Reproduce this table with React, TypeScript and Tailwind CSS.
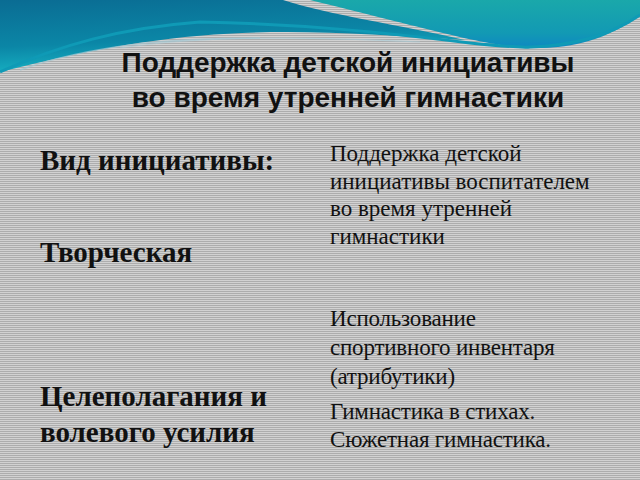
const serif = "font-['Liberation_Serif','Times_New_Roman',serif]";

function Waves() {
  return (
    <svg
      className="absolute left-0 top-0"
      width="640"
      height="80"
      viewBox="0 0 640 80"
    >
      <defs>
        <linearGradient id="tealLeft" x1="0" y1="0" x2="0.3" y2="1">
          <stop offset="0" stopColor="#0a6c93" />
          <stop offset="0.6" stopColor="#0b86a6" />
          <stop offset="1" stopColor="#18b6c6" />
        </linearGradient>
        <linearGradient id="tealRight" x1="0" y1="0" x2="0" y2="1">
          <stop offset="0" stopColor="#1aa8aa" />
          <stop offset="0.7" stopColor="#1299b4" />
          <stop offset="1" stopColor="#0e88c2" />
        </linearGradient>
      </defs>
      <path
        d="M0 0 H283 C330 15 400 25 465 40 C300 30 200 20 0 72 Z"
        fill="url(#tealLeft)"
      />
      <path
        d="M310 0 H640 V15 C600 45 560 50 520 47 C480 44 440 32 310 0 Z"
        fill="url(#tealRight)"
      />
      <path
        d="M0 72 C60 45 120 28 200 22 C300 24 380 32 470 43 C500 46 520 48 530 47 C570 46 610 36 640 15"
        fill="none"
        stroke="#0f9ab6"
        strokeWidth="3"
      />
      <path
        d="M20 70 C90 45 170 38 260 38"
        fill="none"
        stroke="#9fc6d2"
        strokeWidth="1.5"
        opacity="0.7"
      />
      <path
        d="M120 48 C200 36 300 36 420 42"
        fill="none"
        stroke="#a9cdd8"
        strokeWidth="1.2"
        opacity="0.6"
      />
    </svg>
  );
}

export default function App() {
  return (
    <div className="relative w-[640px] h-[480px] overflow-hidden bg-[#c2c2c2] bg-[repeating-linear-gradient(0deg,#adadad_0px,#adadad_1px,#d2d2d2_1px,#d2d2d2_2px)]">
      <Waves />

      <div className="relative flex flex-col">
        <div className="pt-[45px] pl-[56px] text-center font-['Liberation_Sans',Arial,sans-serif] font-bold text-[28px] leading-[35px] text-[#111]">
          <div>Поддержка детской инициативы</div>
          <div>во время утренней гимнастики</div>
        </div>

        <div className="grid grid-cols-[290px_1fr] pl-[40px] pt-[25px] text-[#111]">
          <div className={`${serif} font-bold text-[29px] flex flex-col`}>
            <div className="leading-[30px] mt-[5px]">Вид инициативы:</div>
            <div className="leading-[30px] mt-[62px]">Творческая</div>
            <div className="leading-[36px] mt-[111px]">
              Целеполагания и
              <br />
              волевого усилия
            </div>
          </div>

          <div className={`${serif} text-[23px] flex flex-col`}>
            <div className="leading-[27.7px]">
              Поддержка детской
              <br />
              инициативы воспитателем
              <br />
              во время утренней
              <br />
              гимнастики
            </div>
            <div className="leading-[29px] mt-[52.7px] tracking-[-0.2px]">
              Использование
              <br />
              спортивного инвентаря
              <br />
              (атрибутики)
            </div>
            <div className="leading-[28px] mt-[7.5px] tracking-[-0.2px]">
              Гимнастика в стихах.
              <br />
              Сюжетная гимнастика.
            </div>
          </div>
        </div>
      </div>
    </div>
  );
}
